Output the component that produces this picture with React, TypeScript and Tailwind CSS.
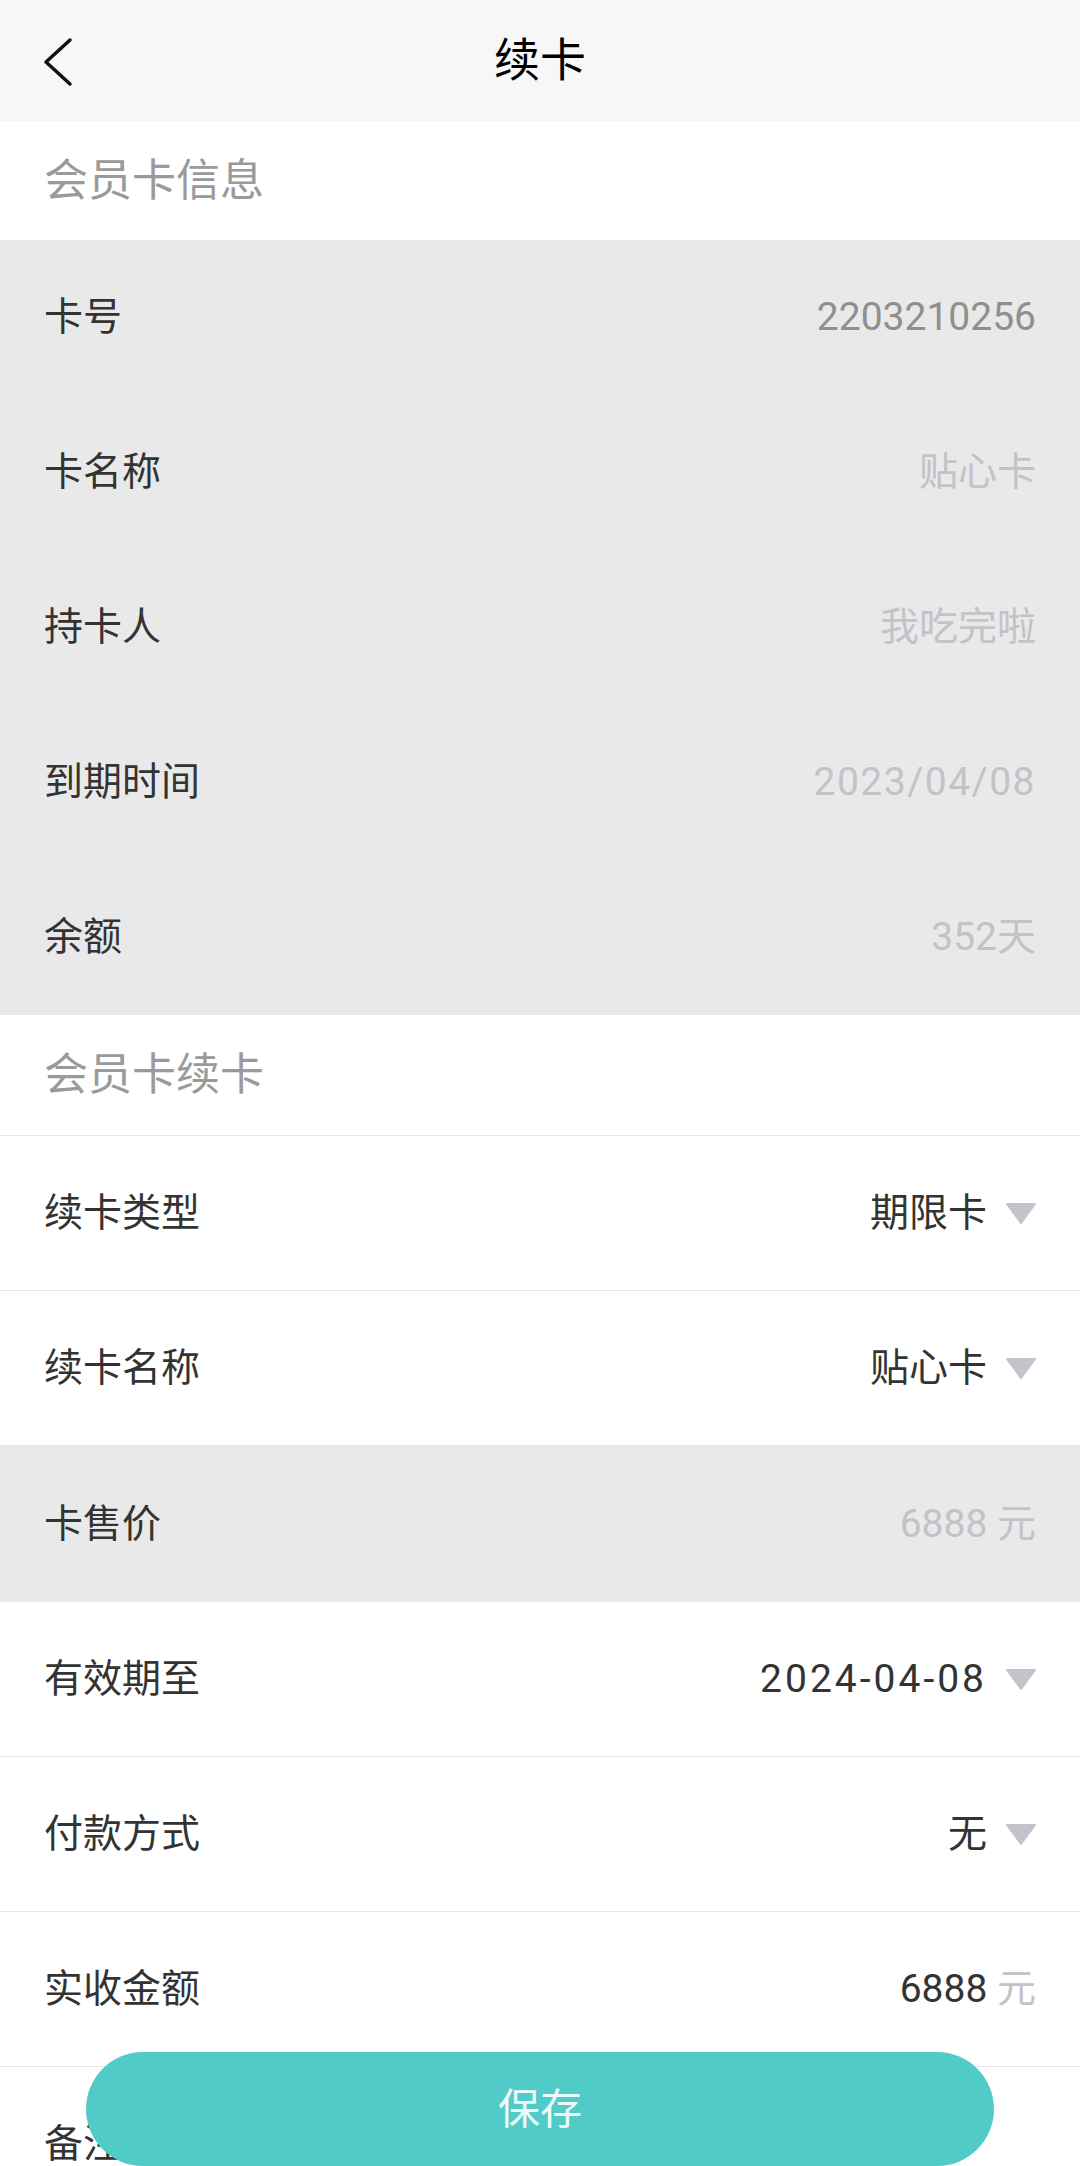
import React from 'react';

const font = { fontFamily: 'Roboto, "Noto Sans CJK SC", sans-serif' };

function Caret() {
  return (
    <svg width="32" height="22" viewBox="0 0 32 22" className="ml-[18px] shrink-0">
      <path d="M2 2 L30 2 L16 21 Z" fill="#c3c3cb" stroke="#c3c3cb" strokeWidth="2" strokeLinejoin="round" />
    </svg>
  );
}

function InfoRow({ label, value, strong, wide }: { label: string; value: string; strong?: boolean; wide?: boolean }) {
  return (
    <div className="flex h-[155px] items-center justify-between px-[44px] text-[39px]">
      <span className="text-[#333333]">{label}</span>
      <span className={`${strong ? 'text-[#8f8f8f]' : 'text-[#c2c2c8]'} ${wide ? 'tracking-[1.5px]' : ''}`}>{value}</span>
    </div>
  );
}

function SelectRow({ label, value, wide }: { label: string; value: string; wide?: boolean }) {
  return (
    <div className="flex h-[155px] items-center justify-between border-b border-[#e6e6e6] pl-[44px] pr-[43px] text-[39px]">
      <span className="text-[#333333]">{label}</span>
      <div className="flex items-center">
        <span className={`text-[#333333] ${wide ? 'tracking-[3px]' : ''}`}>{value}</span>
        <Caret />
      </div>
    </div>
  );
}

export default function App() {
  return (
    <div className="relative min-h-[2166px] bg-white" style={font}>
      {/* nav bar */}
      <div className="relative flex h-[121px] items-center justify-center bg-[#f7f7f7]">
        <button className="absolute left-[40px] top-[36px] p-0">
          <svg width="36" height="52" viewBox="0 0 36 52">
            <path d="M30 4 L6 26 L30 48" fill="none" stroke="#111" strokeWidth="3.5" strokeLinecap="round" strokeLinejoin="round" />
          </svg>
        </button>
        <h1 className="text-[46px] font-normal text-[#000000]">续卡</h1>
      </div>

      {/* card info */}
      <div className="flex h-[119px] items-center px-[44px] text-[44px] text-[#9a9a9a]">会员卡信息</div>
      <div className="bg-[#e9e9ea]">
        <InfoRow label="卡号" value="2203210256" strong />
        <InfoRow label="卡名称" value="贴心卡" />
        <InfoRow label="持卡人" value="我吃完啦" />
        <InfoRow label="到期时间" value="2023/04/08" wide />
        <InfoRow label="余额" value="352天" />
      </div>

      {/* renew */}
      <div className="flex h-[121px] items-center border-b border-[#e6e6e6] px-[44px] text-[44px] text-[#9a9a9a]">会员卡续卡</div>
      <SelectRow label="续卡类型" value="期限卡" />
      <SelectRow label="续卡名称" value="贴心卡" />
      <div className="flex h-[156px] items-center justify-between bg-[#e9e9ea] px-[44px] text-[39px]">
        <span className="text-[#333333]">卡售价</span>
        <span className="text-[#c2c2c8]">6888 元</span>
      </div>
      <SelectRow label="有效期至" value="2024-04-08" wide />
      <SelectRow label="付款方式" value="无" />
      <div className="flex h-[155px] items-center justify-between border-b border-[#e6e6e6] px-[44px] text-[39px]">
        <span className="text-[#333333]">实收金额</span>
        <span className="text-[#333333]">
          6888 <span className="text-[#c2c2c8]">元</span>
        </span>
      </div>
      <div className="flex h-[155px] items-center px-[44px] text-[39px] text-[#333333]">备注</div>

      {/* save button */}
      <button className="fixed bottom-0 left-[86px] right-[86px] h-[114px] rounded-full bg-[#50cbc7] text-[42px] text-white/90">
        保存
      </button>
    </div>
  );
}
